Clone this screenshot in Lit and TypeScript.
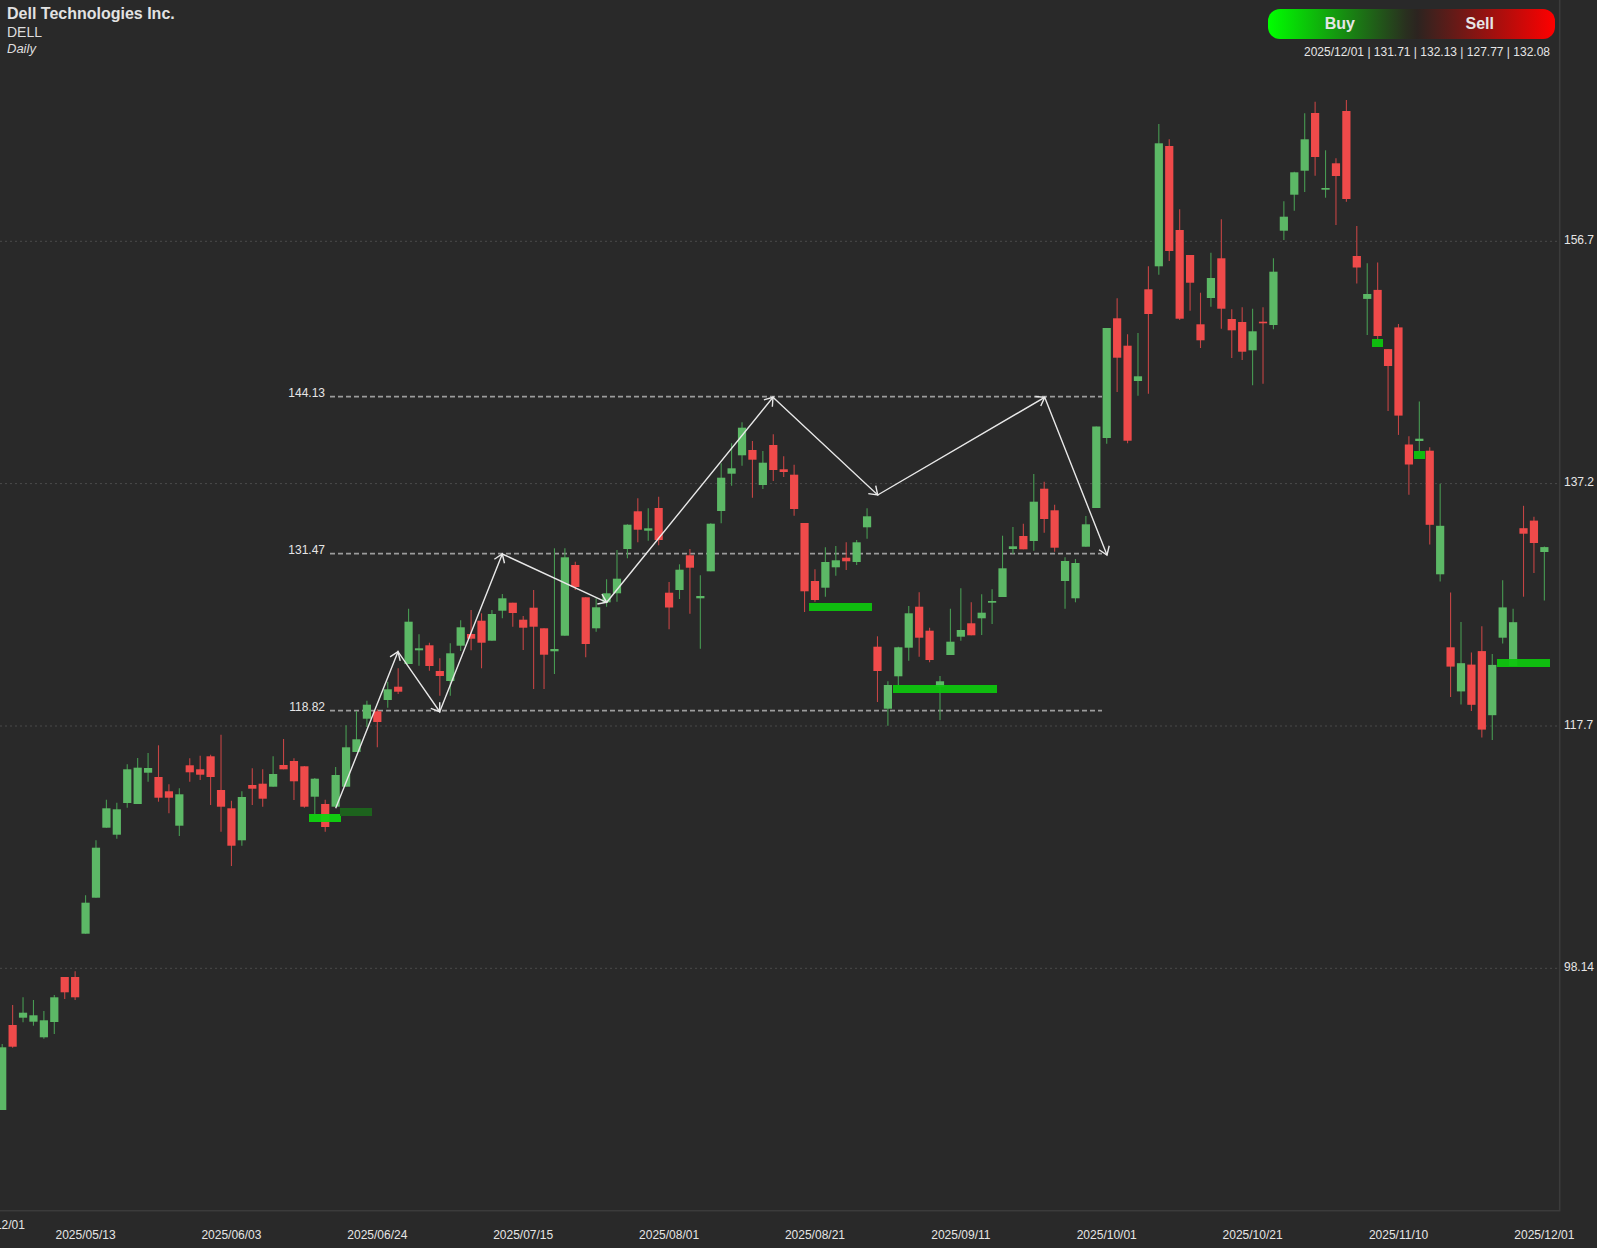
import { LitElement, html, svg, css } from "lit";
import { customElement } from "lit/decorators.js";

type C = [string, number, number, number, number];
// colour, high, body top, body bottom, low (pixel rows of the chart)
const CANDLES: C[] = [
["g",1044,1047.3,1110,1110],["r",1005,1025,1046.7,1047.7],["g",997.3,1012.7,1017.7,1022.3],["g",1000,1015.3,1021.7,1025.7],["g",1011,1020.3,1037.3,1038.7],["g",995,997.3,1022,1034],["r",977,977,992.3,999],["r",971.3,977,997.3,1000],
["g",895.3,902.7,933.7,933.7],["g",840.3,847.7,897.7,897.7],["g",799.7,808.3,827.7,827.7],["g",802.7,809.3,834.7,838.7],["g",764.3,769.3,803,807.7],["g",758,767.7,804,804],["g",753,768,772.7,781.7],["r",745.3,777,797.7,801.7],
["r",784.3,791.3,797.7,813.3],["g",788.3,794.3,825.7,836],["r",758.3,765.3,772.3,781.7],["r",755.7,769.3,774.7,780],["r",754.7,756.3,777,805],["r",734.7,790,806.7,831.7],["r",800.7,808.3,845.7,866],["g",791.3,797,840.3,845.7],
["r",768.3,785,788.7,805],["r",769.3,783.7,798.7,806.7],["g",756.3,774,786.7,786.7],["r",739,765,769.3,769.3],["r",758.3,761,781.3,800],["r",766,766.3,806.7,807.7],["g",778,778.7,796.7,814],["r",799.7,804,827,831.7],
["g",767,775,806.7,806.7],["g",725.3,747.3,786.7,786.7],["g",711,739.3,752,752],["g",700.7,704.7,718.7,727],["r",709.3,711.3,722,747.3],["g",681.7,689.3,700,707.7],["r",668.3,686.7,691.7,694],["g",608.7,621.7,664,664],
["g",634.3,648.3,650.3,665.7],["r",642.7,645.3,666,670.7],["r",658.3,671,676,695.7],["g",643.3,653.3,681,695.7],["g",620.3,627.3,645.7,651],["r",610,634,638.7,650.3],["r",613.3,620.7,642.7,668.3],["g",610,614,640.7,640.7],
["g",594,598.3,610.7,618.3],["r",602.7,602.7,613,626.7],["r",616,619.7,627.7,650],["r",590,607.7,626.7,689],["r",628.3,628.3,654.7,689],["g",548.3,649,651.3,674],["g",548.3,557.3,635.7,635.7],["r",561.7,565,587,590],
["r",597.3,597.3,644,657.3],["g",598.3,607.3,628.3,631.7],["g",579.3,593.3,602.3,606.7],["g",550,578.7,593.3,601.7],["g",524.3,524.7,549,558.3],["r",498.3,511.3,529.7,542.3],["g",508.3,528.3,530.7,540.7],["r",496.7,508,540,545.3],
["r",582,592.7,607.5,629.3],["g",564.3,569.7,590,599],["r",549,555.3,567.7,613.7],["g",575.3,596,598.3,648.7],["g",523.3,523.7,571.3,571.3],["g",463.3,477.7,511,523.3],["g",443.3,468.3,473.7,485.7],["g",422.3,427.7,455.3,465.7],
["r",441,450,459.7,497.7],["g",451,462.7,485,489],["r",434.3,445,470,481],["r",456.3,469.3,472,477],["r",464.7,474.7,509,515.7],["r",523,523,591.3,612],["r",569.3,581,600,601.7],["g",547.3,562,587.7,596.7],
["g",546,560.3,567.3,575.7],["r",542.3,557.7,561.3,570],["g",540,542.3,562,565],["g",508.3,516.3,527.3,538.7],["r",636.3,646.7,671,702],["g",681.3,685,708.7,725.7],["g",646.7,647.3,676.3,685],["g",606,613.3,647.7,660.7],
["r",592.3,606.7,637.7,656.7],["r",627.7,630.7,660,662.3],["g",676,681.3,686.7,720],["g",608.7,641.7,655,655],["g",588.3,630,636.7,640.7],["r",602.3,623.3,635.3,635.3],["g",594.3,612.7,618.3,635],["g",589.3,601,602.7,624],
["g",535.7,568.3,597,597],["g",527,546.3,549,554],["r",523.7,536,549.3,549.3],["g",474,501.7,541,550.7],["r",481.7,488.7,519,532.7],["r",504.7,510.3,547.7,551.7],["g",557.3,561,581,608.7],["g",559,563,598.3,602.3],
["g",516,524.3,546.7,546.7],["g",426.5,426.5,508,508],["g",328,328,438,443.7],["r",298.3,318.3,357.7,392],["r",334.3,345.7,440.7,443.3],["g",333,376.3,381,395.7],["r",266.3,289.3,314,393.7],["g",124,143.3,266.3,274.7],
["r",139.3,146,251,261],["r",209.3,230,318.7,320],["r",255,255,282.7,310.7],["r",292.7,324.3,340.3,348],["g",252.7,278,298,306.7],["r",219.3,258.3,308.7,328.7],["r",309.3,319,330.3,358],["r",307.3,322,351.7,360],
["g",308.7,331.3,350.3,385.3],["r",307.3,321.7,323.3,383.7],["g",258.3,271.7,325,329.3],["g",201.3,216.7,230.7,240],["g",171.7,172.3,194.7,210.7],["g",113.3,139.3,170.7,192],["r",101.7,113,157,175.7],["g",150.3,188,189.7,197.7],
["r",158.3,163.3,176,225],["r",100,111,199,201.7],["r",226,256,267.5,283.5],["g",263.3,294,298.9,335],["r",262.4,289.9,336,340],["r",349,349.1,366,411.1],["r",324,327.4,415.6,434.9],["r",436.3,444.5,464.5,494.8],
["g",401.5,438.7,441,451.4],["r",447.3,450.7,524.8,544.4],["g",483.8,525.8,574.3,581.6],["r",592.6,647.3,666.6,696.9],["g",621.9,663.2,691.4,704.5],["r",652.5,664.6,704.8,711],["r",626.3,651.1,729.6,737.6],["g",653.9,664.9,715.2,740],
["g",580.2,607.4,637.7,643.6],["g",608.8,622.2,666,666],["r",505.8,528.2,533.7,596.7],["r",516.8,520.6,543,573],["g",546.4,547.1,552,600.5],
];

const X0 = 2.2;
const STEP = 10.42;
const BODY = 8.2;
const COL: Record<string, string> = { g: "#5cb866", r: "#ef4a4a" };
const WICK: Record<string, string> = { g: "#479a52", r: "#c44444" };

const GRID = [
  { y: 241.3, label: "156.7" },
  { y: 483.6, label: "137.2" },
  { y: 726, label: "117.7" },
  { y: 968.3, label: "98.14" },
];
const LEVELS = [
  { y: 396.7, label: "144.13" },
  { y: 553.7, label: "131.47" },
  { y: 710.7, label: "118.82" },
];
const ZONES = [
  { x: 309, y: 814, w: 32, cls: "zone-hi" },
  { x: 340, y: 808, w: 32, cls: "zone-off" },
  { x: 809, y: 603, w: 63, cls: "zone-on" },
  { x: 893, y: 685, w: 104, cls: "zone-on" },
  { x: 1372, y: 339, w: 11, cls: "zone-on" },
  { x: 1414, y: 451, w: 11, cls: "zone-on" },
  { x: 1497, y: 659, w: 53, cls: "zone-on" },
];
const WAVE: [number, number][] = [
  [335.7, 808.3], [398, 651.7], [439.7, 711.7], [502.3, 554], [606.7, 602.3],
  [773, 397.3], [877.7, 495], [1044.7, 397.3], [1107, 555],
];
const DATES = ["2025/12/01", "2025/05/13", "2025/06/03", "2025/06/24", "2025/07/15", "2025/08/01", "2025/08/21", "2025/09/11", "2025/10/01", "2025/10/21", "2025/11/10", "2025/12/01"];

function barbs(a: [number, number], b: [number, number]): string {
  const ang = Math.atan2(a[1] - b[1], a[0] - b[0]);
  const L = 9.5;
  const d = (35 * Math.PI) / 180;
  const p1 = [b[0] + L * Math.cos(ang + d), b[1] + L * Math.sin(ang + d)];
  const p2 = [b[0] + L * Math.cos(ang - d), b[1] + L * Math.sin(ang - d)];
  return `M${p1[0]} ${p1[1]}L${b[0]} ${b[1]}L${p2[0]} ${p2[1]}`;
}

@customElement("app-root")
export class AppRoot extends LitElement {
  static styles = css`
    :host {
      display: block;
      position: relative;
      width: 1597px;
      height: 1248px;
      overflow: hidden;
      background: #292929;
      font-family: "Liberation Sans", Arial, sans-serif;
      color: #e4e4e4;
    }
    .chart { display: block; width: 1597px; height: 1248px; }
    .frame { stroke: #3b3b3b; stroke-width: 1.6; fill: none; }
    .grid { stroke: #4a4a4a; stroke-width: 1; stroke-dasharray: 2 3; }
    .level { stroke: #9c9c9c; stroke-width: 1.8; stroke-dasharray: 5 3; }
    .wave { stroke: #e8e8e8; stroke-width: 1.4; fill: none; stroke-linejoin: miter; }
    .tick { font-size: 12px; fill: #e6e6e6; font-family: "Liberation Sans", Arial, sans-serif; }
    .end { text-anchor: end; }
    .mid { text-anchor: middle; }
    .zone-hi { fill: #10d410; fill-opacity: 0.94; }
    .zone-on { fill: #0ec60e; fill-opacity: 0.94; }
    .zone-off { fill: #1d631d; }

    .overlay {
      position: absolute;
      inset: 0 0 auto 0;
      display: flex;
      justify-content: space-between;
      align-items: flex-start;
      padding: 4px 42px 0 7px;
    }
    .name { font-size: 16px; font-weight: 700; line-height: 19px; color: #e2e2e2; }
    .sym { font-size: 14px; line-height: 18px; color: #dedede; }
    .freq { font-size: 13px; line-height: 16px; font-style: italic; color: #dedede; }
    .side { display: flex; flex-direction: column; align-items: flex-end; gap: 5px; padding-top: 5px; }
    .pill {
      width: 287px;
      height: 30px;
      border-radius: 12px;
      background: linear-gradient(90deg, #00ff00 0%, #29301f 48%, #2c2420 52%, #ff0000 100%);
      display: grid;
      grid-template-columns: 1fr 1fr;
      align-items: center;
      font-size: 16px;
      font-weight: 700;
      color: #e6e6e6;
    }
    .pill span { text-align: center; }
    .pill .sell { padding-right: 7px; }
    .ohlc { font-size: 12px; line-height: 16px; color: #e6e6e6; padding-right: 5px; white-space: nowrap; }
  `;

  render() {
    const cx = (i: number) => X0 + STEP * i;
    return html`
      <svg class="chart" viewBox="0 0 1597 1248" xmlns="http://www.w3.org/2000/svg">
        ${GRID.map((g) => svg`
          <line class="grid" x1="0" x2="1559" y1=${g.y} y2=${g.y}></line>
          <text class="tick" x="1564" y=${g.y + 2.5}>${g.label}</text>`)}
        <path class="frame" d="M1559.7 0V1210.7H0"></path>
        ${LEVELS.map((l) => svg`
          <line class="level" x1="330" x2="1102" y1=${l.y} y2=${l.y}></line>
          <text class="tick end" x="325" y=${l.y + 0.6}>${l.label}</text>`)}
        ${CANDLES.map((c, i) => {
          const x = cx(i);
          return svg`
            <line x1=${x} x2=${x} y1=${c[1]} y2=${c[4]} stroke=${WICK[c[0]]} stroke-width="1.1"></line>
            <rect x=${x - BODY / 2} y=${c[2]} width=${BODY} height=${Math.max(c[3] - c[2], 1.5)} fill=${COL[c[0]]}></rect>`;
        })}
        ${ZONES.map((z) => svg`<rect class=${z.cls} x=${z.x} y=${z.y} width=${z.w} height="8"></rect>`)}
        <polyline class="wave" points=${WAVE.map((p) => p.join(",")).join(" ")}></polyline>
        ${WAVE.slice(1).map((p, i) => svg`<path class="wave" d=${barbs(WAVE[i], p)}></path>`)}
        ${DATES.map((d, i) => {
          const idx = i === 0 ? -0.7 : 8 + (i - 1) * 14;
          const y = i === 0 ? 1228.5 : 1238.5;
          return svg`<text class="tick mid" x=${cx(idx)} y=${y}>${d}</text>`;
        })}
      </svg>
      <div class="overlay">
        <div>
          <div class="name">Dell Technologies Inc.</div>
          <div class="sym">DELL</div>
          <div class="freq">Daily</div>
        </div>
        <div class="side">
          <div class="pill"><span>Buy</span><span class="sell">Sell</span></div>
          <div class="ohlc">2025/12/01 | 131.71 | 132.13 | 127.77 | 132.08</div>
        </div>
      </div>
    `;
  }
}
